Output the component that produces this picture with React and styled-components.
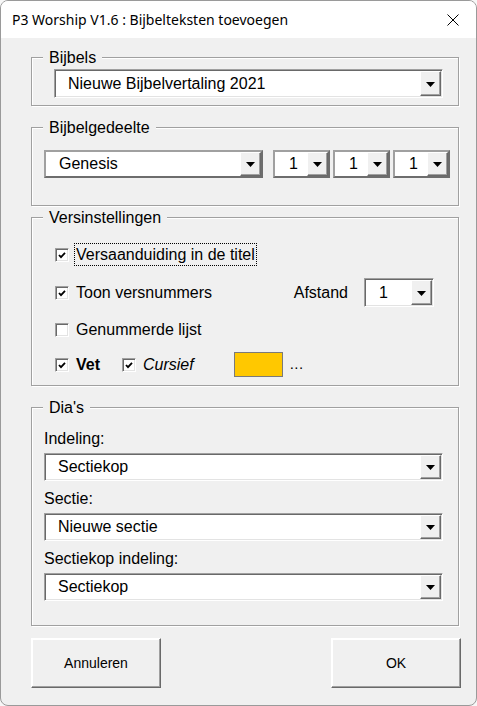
import React from "react";
import styled, { createGlobalStyle, css } from "styled-components";

const Global = createGlobalStyle`
  html, body { margin: 0; padding: 0; background: #f7f7f7; }
  * { box-sizing: border-box; }
`;

const FONT = `"Liberation Sans", Arial, sans-serif`;

const Window = styled.div`
  width: 477px;
  height: 706px;
  border: 1px solid #9a9a9a;
  border-radius: 8px;
  background: #f0f0f0;
  overflow: hidden;
  display: flex;
  flex-direction: column;
  font-family: ${FONT};
  font-size: 16px;
  color: #000;
`;

const TitleBar = styled.div`
  height: 37px;
  flex: none;
  background: #fff;
  display: flex;
  align-items: center;
  padding-left: 11px;
`;

const Title = styled.div`
  flex: 1;
  font-family: "Noto Sans", "Open Sans", sans-serif;
  font-size: 14px;
  color: #000;
  padding-bottom: 1px;
`;

const CloseBtn = styled.div`
  width: 46px;
  height: 37px;
  display: flex;
  align-items: center;
  justify-content: center;
`;

const Body = styled.div`
  flex: 1;
  padding: 19px 0 0 30px;
  display: flex;
  flex-direction: column;
`;

const Frame = styled.div`
  position: relative;
  width: 428px;
  height: ${(p) => p.$h}px;
  margin-top: ${(p) => p.$mt || 0}px;
  border: 1px solid #a0a0a0;
  box-shadow: 1px 1px 0 #fff, inset 1px 1px 0 #fff;
  padding: ${(p) => p.$pad};
  display: flex;
  flex-direction: column;
  flex: none;
`;

const Legend = styled.span`
  position: absolute;
  left: 11px;
  top: -9px;
  padding: 0 6px;
  line-height: 18px;
  background: #f0f0f0;
`;

const sunken = css`
  border-style: solid;
  border-width: 1px;
  border-color: #a0a0a0 #fff #fff #a0a0a0;
  box-shadow: inset 1px 1px 0 #696969, inset -1px -1px 0 #e3e3e3;
  padding: 1px;
`;

const bump = css`
  border-style: solid;
  border-width: 2px;
  border-color: #a0a0a0 #6d6d6d #6d6d6d #a0a0a0;
  padding: 0;
`;

const Combo = styled.div`
  display: flex;
  width: ${(p) => p.$w}px;
  height: ${(p) => p.$h || 29}px;
  background: #fff;
  flex: none;
  ${(p) => (p.$bump ? bump : sunken)}
`;

const ComboValue = styled.div`
  flex: 1;
  display: flex;
  align-items: center;
  padding-left: ${(p) => p.$pl || 12}px;
  white-space: nowrap;
  overflow: hidden;
`;

const DropBtn = styled.div`
  width: 21px;
  flex: none;
  background: #f0f0f0;
  border-style: solid;
  border-width: 1px;
  border-color: #fff #696969 #696969 #fff;
  box-shadow: inset -1px -1px 0 #a0a0a0;
  display: flex;
  align-items: center;
  justify-content: center;
  padding-top: 1px;
`;

const Arrow = () => (
  <svg width="9" height="5" viewBox="0 0 9 5">
    <polygon points="0,0 9,0 4.5,5" fill="#000" />
  </svg>
);

const ComboBox = ({ value, w, h, isBump, pl }) => (
  <Combo $w={w} $h={h} $bump={isBump}>
    <ComboValue $pl={pl}>{value}</ComboValue>
    <DropBtn>
      <Arrow />
    </DropBtn>
  </Combo>
);

const Row = styled.div`
  display: flex;
  align-items: center;
  gap: ${(p) => p.$gap || 0}px;
  margin-left: ${(p) => p.$ml || 0}px;
`;

const OptionRow = styled.div`
  display: flex;
  align-items: center;
  height: ${(p) => p.$h}px;
  margin-top: ${(p) => p.$mt || 0}px;
  flex: none;
`;

const Box = styled.span`
  width: 14px;
  height: 14px;
  flex: none;
  background: #fff;
  border: 1px solid;
  border-color: #a0a0a0 #fff #fff #a0a0a0;
  box-shadow: inset 1px 1px 0 #696969, inset -1px -1px 0 #e3e3e3;
  margin-left: ${(p) => p.$ml || 0}px;
  display: flex;
  align-items: center;
  justify-content: center;
`;

const Check = () => (
  <svg width="10" height="10" viewBox="0 0 10 10">
    <polyline points="2,5 4,7.2 8,2.8" fill="none" stroke="#000" strokeWidth="1.8" />
  </svg>
);

const CheckLabel = styled.span`
  margin-left: 5px;
  padding: 0 1px;
  line-height: 21px;
  border: 1px ${(p) => (p.$focus ? "dotted #000" : "solid transparent")};
  font-weight: ${(p) => (p.$bold ? 700 : 400)};
  font-style: ${(p) => (p.$italic ? "italic" : "normal")};
  white-space: nowrap;
`;

const CheckItem = ({ checked, label, focus, bold, italic, ml }) => (
  <>
    <Box $ml={ml}>{checked && <Check />}</Box>
    <CheckLabel $focus={focus} $bold={bold} $italic={italic}>
      {label}
    </CheckLabel>
  </>
);

const SideLabel = styled.span`
  margin-left: auto;
  margin-right: 16px;
`;

const Swatch = styled.span`
  width: 49px;
  height: 25px;
  background: #ffc800;
  border: 1px solid #7a7a7a;
  margin-left: 38px;
  flex: none;
`;

const Ellipsis = styled.span`
  margin-left: 7px;
  font-size: 15px;
  letter-spacing: 0.5px;
  padding-bottom: 2px;
`;

const Field = styled.div`
  display: flex;
  flex-direction: column;
  margin-top: ${(p) => p.$mt || 0}px;
`;

const FieldLabel = styled.div`
  line-height: 20px;
  margin-bottom: 4px;
`;

const ButtonRow = styled.div`
  width: 430px;
  margin-top: 12px;
  display: flex;
  justify-content: space-between;
`;

const Button = styled.div`
  width: 130px;
  height: 50px;
  background: #f0f0f0;
  border: 1px solid;
  border-color: #fff #696969 #696969 #fff;
  box-shadow: inset -1px -1px 0 #a0a0a0, inset 1px 1px 0 #fff;
  display: flex;
  align-items: center;
  justify-content: center;
  font-size: 14px;
`;

export default function App() {
  return (
    <>
      <Global />
      <Window>
        <TitleBar>
          <Title>P3 Worship V1.6 : Bijbelteksten toevoegen</Title>
          <CloseBtn>
            <svg width="12" height="12" viewBox="0 0 12 12">
              <path d="M0.5 0.5 L11.5 11.5 M11.5 0.5 L0.5 11.5" stroke="#000" strokeWidth="1" />
            </svg>
          </CloseBtn>
        </TitleBar>
        <Body>
          <Frame $h={49} $pad="11px 0 0 22px">
            <Legend>Bijbels</Legend>
            <ComboBox value="Nieuwe Bijbelvertaling 2021" w={389} />
          </Frame>

          <Frame $h={79} $mt={21} $pad="22px 0 0 12px">
            <Legend>Bijbelgedeelte</Legend>
            <Row>
              <ComboBox value="Genesis" w={219} h={28} isBump pl={13} />
              <Row $gap={3} $ml={10}>
                <ComboBox value="1" w={57} h={28} isBump pl={14} />
                <ComboBox value="1" w={57} h={28} isBump pl={14} />
                <ComboBox value="1" w={57} h={28} isBump pl={14} />
              </Row>
            </Row>
          </Frame>

          <Frame $h={169} $mt={11} $pad="24px 24px 0 23px">
            <Legend>Versinstellingen</Legend>
            <OptionRow $h={25}>
              <CheckItem checked focus label="Versaanduiding in de titel" />
            </OptionRow>
            <OptionRow $h={29} $mt={11}>
              <CheckItem checked label="Toon versnummers" />
              <SideLabel>Afstand</SideLabel>
              <ComboBox value="1" w={70} pl={13} />
            </OptionRow>
            <OptionRow $h={23} $mt={11}>
              <CheckItem label="Genummerde lijst" />
            </OptionRow>
            <OptionRow $h={25} $mt={11}>
              <CheckItem checked bold label="Vet" />
              <CheckItem checked italic ml={20} label="Cursief" />
              <Swatch />
              <Ellipsis>...</Ellipsis>
            </OptionRow>
          </Frame>

          <Frame $h={219} $mt={21} $pad="21px 0 0 12px">
            <Legend>Dia's</Legend>
            <Field>
              <FieldLabel>Indeling:</FieldLabel>
              <ComboBox value="Sectiekop" w={399} h={28} />
            </Field>
            <Field $mt={8}>
              <FieldLabel>Sectie:</FieldLabel>
              <ComboBox value="Nieuwe sectie" w={399} h={28} />
            </Field>
            <Field $mt={8}>
              <FieldLabel>Sectiekop indeling:</FieldLabel>
              <ComboBox value="Sectiekop" w={399} h={28} />
            </Field>
          </Frame>

          <ButtonRow>
            <Button>Annuleren</Button>
            <Button>OK</Button>
          </ButtonRow>
        </Body>
      </Window>
    </>
  );
}
